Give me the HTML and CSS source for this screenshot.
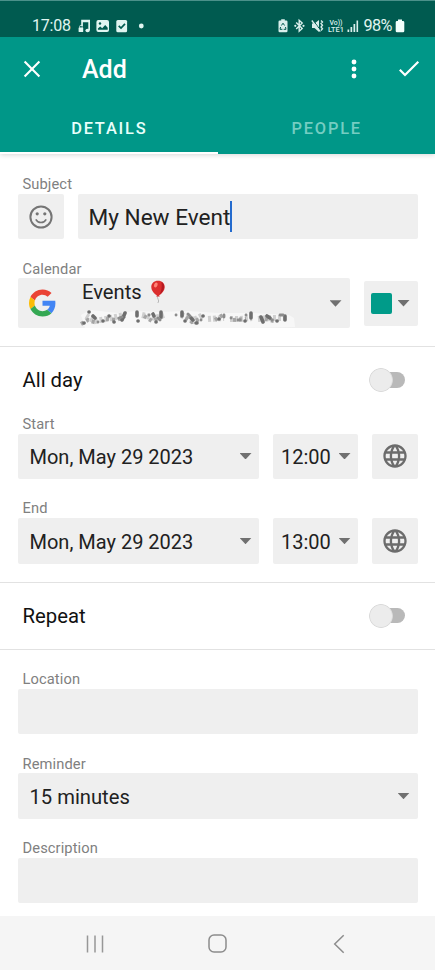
FILE: index.html
```html
<!DOCTYPE html>
<html lang="en">
<head>
<meta charset="utf-8">
<title>Add event</title>
<link rel="stylesheet" href="styles.css">
</head>
<body>
<svg class="defs" width="0" height="0">
  <symbol id="globe" viewBox="0 0 24 24"><path fill="currentColor" d="M11.99 2C6.47 2 2 6.48 2 12s4.47 10 9.99 10C17.52 22 22 17.52 22 12S17.52 2 11.99 2zm6.93 6h-2.95c-.32-1.25-.78-2.45-1.38-3.56 1.84.63 3.37 1.91 4.33 3.56zM12 4.04c.83 1.2 1.48 2.53 1.91 3.96h-3.82c.43-1.43 1.08-2.76 1.91-3.96zM4.26 14C4.1 13.36 4 12.69 4 12s.1-1.36.26-2h3.38c-.08.66-.14 1.32-.14 2 0 .68.06 1.34.14 2H4.26zm.82 2h2.95c.32 1.25.78 2.45 1.38 3.56-1.84-.63-3.37-1.9-4.33-3.56zm2.95-8H5.08c.96-1.66 2.49-2.93 4.33-3.56C8.81 5.55 8.35 6.75 8.03 8zM12 19.96c-.83-1.2-1.48-2.53-1.91-3.96h3.82c-.43 1.43-1.08 2.76-1.91 3.96zM14.34 14H9.66c-.09-.66-.16-1.32-.16-2 0-.68.07-1.35.16-2h4.68c.09.65.16 1.32.16 2 0 .68-.07 1.34-.16 2zm.25 5.56c.6-1.11 1.06-2.31 1.38-3.56h2.95c-.96 1.65-2.49 2.93-4.33 3.56zM16.36 14c.08-.66.14-1.32.14-2 0-.68-.06-1.34-.14-2h3.38c.16.64.26 1.31.26 2s-.1 1.36-.26 2h-3.38z"/></symbol>
</svg>
<header class="header">
  <div class="status">
    <span class="clock">17:08</span>
    <svg class="status-left" width="70" height="16" viewBox="0 0 70 16" fill="#e0f5f1">
      <path d="M3.2 1.800H12V12H10.300V4.300H4.900V8H3.200z"/><ellipse cx="9.600" cy="12.500" rx="2.200" ry="1.800"/><rect x=".6" y="9.500" width="4.600" height="4.600" rx=".6"/><path d="M1.600 9.800V8.600a1.300 1.300 0 0 1 2.600 0v1.200" fill="none" stroke="#e0f5f1" stroke-width=".8"/>
      <rect x="18.400" y="2" width="12.600" height="12" rx="2"/><circle cx="22" cy="5.500" r="1.200" fill="#005b50"/><path d="M19.900 11.800V10.500l2.300-2 2 1.700 3-3.200 2.500 2.800v2z" fill="#005b50"/>
      <rect x="38.300" y="2" width="10.800" height="12.300" rx="1.500"/><path d="M40.700 7.800l2.300 2.300 4-4.300" fill="none" stroke="#005b50" stroke-width="1.700"/>
      <circle cx="63.300" cy="8" r="2.400"/>
    </svg>
    <svg class="status-right" width="84" height="16" viewBox="0 0 84 16" fill="#d9efec">
      <path d="M3.200 2.500V1.200h3.600v1.300h1.400q1.300 0 1.300 1.300V13q0 1.300-1.300 1.300H1.800Q.5 14.300.5 13V3.800q0-1.300 1.300-1.300z"/><path d="M3.400 7.500L5 5.200l1.600 2.300M7.500 9l.5 2.300H5.700M4.400 11.300H2L2.600 9" fill="none" stroke="#005b50"/>
      <path d="M18.200 4.500l6 6-3 2.700V2.300l3 2.800-6 5.800" fill="none" stroke="#d9efec" stroke-width="1.400"/><circle cx="17.300" cy="7.800" r="1.100"/><circle cx="25.500" cy="7.800" r="1.100"/>
      <path d="M34 5.500h2.500L41 2v12l-4.500-4H34z"/><path d="M35 2.200l8.300 11" stroke="#005b50" stroke-width="1"/><path d="M33.800 2.500l8.500 11.200M43 2.500l1.500 1.500-1.500 1.500 1.500 1.700-1.500 1.800 1.500 1.800-1.500 1.700" fill="none" stroke="#d9efec" stroke-width="1.300"/>
      <text class="tiny" x="51.500" y="6.500" textLength="13" lengthAdjust="spacingAndGlyphs">Vo))</text><text class="tiny" x="50" y="14.300" textLength="16" lengthAdjust="spacingAndGlyphs">LTE1</text>
      <path d="M69.500 11.500h1.700V14h-1.700zM72.500 9h1.700v5h-1.700zM75.500 6h1.700v8h-1.700z"/><path d="M78.500 2.500h1.600V14h-1.600z"/>
    </svg>
    <span class="percent">98%</span>
    <svg class="battery" width="10" height="16" viewBox="0 0 10 16" fill="#f2fffc"><path d="M3 3V1.500h4V3h1q1.300 0 1.300 1.300V13q0 1.300-1.300 1.300H2Q.7 14.300.7 13V4.300Q.7 3 2 3z"/></svg>
  </div>
  <div class="appbar">
    <svg class="close" width="18" height="18" viewBox="0 0 18 18"><path d="M1.600 1.600l14.800 14.800M16.400 1.600L1.600 16.400" stroke="#fff" stroke-width="2.100"/></svg>
    <h1 class="title">Add</h1>
    <svg class="more" width="6" height="20" viewBox="0 0 6 20" fill="#fff"><circle cx="3" cy="3" r="2.450"/><circle cx="3" cy="10" r="2.450"/><circle cx="3" cy="17" r="2.450"/></svg>
    <svg class="done" width="22" height="18" viewBox="0 0 22 18"><path d="M1.800 9.800l5.200 5.200L20.300 1.800" fill="none" stroke="#fff" stroke-width="2.200"/></svg>
  </div>
  <nav class="tabs"><div class="tab active"><span>DETAILS</span></div><div class="tab"><span>PEOPLE</span></div></nav>
</header>
<main class="form">
  <section class="group">
    <div class="label">Subject</div>
    <div class="row subject">
      <div class="field square"><svg width="24" height="24" viewBox="0 0 24 24" fill="none" stroke="#757575" stroke-width="2"><circle cx="12" cy="12" r="10.600"/><path d="M6.800 14.300q1.700 3.200 5.200 3.200t5.200-3.200" stroke-width="1.600"/><circle cx="8.200" cy="8.800" r="1.600" fill="#757575" stroke="none"/><circle cx="15.800" cy="8.800" r="1.600" fill="#757575" stroke="none"/></svg></div>
      <div class="field name"><span>My New Event</span><i class="caret"></i></div>
    </div>
    <div class="label">Calendar</div>
    <div class="row calendar">
      <div class="field account">
        <svg class="google" width="27" height="28" viewBox="0 0 48 48"><path fill="#ea4335" d="M24 9.500c3.540 0 6.710 1.220 9.210 3.600l6.850-6.850C35.900 2.380 30.470 0 24 0 14.620 0 6.510 5.380 2.560 13.220l7.980 6.190C12.430 13.720 17.740 9.500 24 9.500z"/><path fill="#4285f4" d="M46.980 24.550c0-1.570-.15-3.090-.38-4.550H24v9.020h12.940c-.58 2.960-2.260 5.480-4.780 7.180l7.730 6c4.510-4.180 7.090-10.360 7.090-17.650z"/><path fill="#fbbc05" d="M10.530 28.590A14.500 14.500 0 0 1 9.770 24c0-1.600.27-3.140.76-4.590l-7.980-6.190A23.900 23.900 0 0 0 0 24c0 3.880.92 7.540 2.560 10.780l7.970-6.190z"/><path fill="#34a853" d="M24 48c6.480 0 11.930-2.130 15.890-5.810l-7.730-6c-2.150 1.450-4.920 2.300-8.160 2.300-6.260 0-11.570-4.220-13.470-9.910l-7.980 6.190C6.510 42.620 14.620 48 24 48z"/></svg>
        <div class="account-text">
          <div class="account-name"><span>Events</span><svg width="16" height="24" viewBox="0 0 16 24"><path d="M8 15.500q-1.200 2 .1 3.700t-.2 3.800" fill="none" stroke="#aaa" stroke-width=".8"/><path d="M8 .8c4 0 6.700 2.700 6.700 6.200 0 3.600-3 7-5.600 8.200l.7 1.300H6.200l.7-1.300C4.300 14 1.300 10.600 1.300 7 1.300 3.500 4 .8 8 .8z" fill="#dc2e2e"/><path d="M11.500 2q3 1.800 2.600 5.500-.6 4-4.600 7 2.900-4.500 2-12.500z" fill="#b51a22"/><ellipse cx="5.800" cy="5" rx="1.700" ry="2.500" transform="rotate(25 5.800 5)" fill="#ff8376"/></svg></div>
          <svg class="redacted" width="220" height="22" viewBox="0 0 220 22" fill="none">
            <path d="M1 9l9-5 28 3 18-2 22 1 30-1 30 2 36 0 35 2 5 3 1 9-46 1-48 0-20 0-30 1-30-1-36 0z" fill="#f7f7f7"/>
            <g stroke="#cfcfcf" stroke-width="6" stroke-dasharray="3 2"><path d="M6 10l9 5 16-3 13-3M62 9l13 3 9-3M101 9l13 5 9-5M128 13l16-1M150 13h10l12-1M178 13l12-1 15 0"/></g>
            <g stroke="#a5a5a5" stroke-width="4" stroke-dasharray="3 3"><path d="M1 18l7-4 9 3M26 13l11 1 8-4M64 10l8 5 10-4M106 11l6 5 8-3M135 14l8-5M153 14l13-1M185 13l9 2"/></g>
            <g stroke="#6e6e6e" stroke-width="3.600" stroke-linecap="round"><path d="M9 6h.1M13 10l2 2M4 17h.1M23 15h.1M29 10h.1M34 16h.1M45 7l-3 7M57 6v4M58 15h.1M73 8l1 2M81 6v5M76 16h.1M102 6v4M105 15h.1M111 12l2 2M116 17h1M123 10h.1M139 13h.1M165 15h.1M171 7v5M181 11l2 5M187 10l3 2M197 15h.1M205 10v4"/></g>
            <g stroke="#8c8c8c" stroke-width="2.800" stroke-linecap="round"><path d="M18 16h.1M39 12l3-1M69 9h.1M78 12l2 2M96 9h.1M108 8l2 2M121 14h.1M144 9v2M151 12h.1M158 14h2M166 9h.1M192 14h.1M200 9l3 0"/></g>
          </svg>
        </div>
        <i class="arrow"></i>
      </div>
      <div class="field color"><i class="swatch"></i><i class="arrow"></i></div>
    </div>
  </section>
  <section class="group dates">
    <div class="toggle-row"><span>All day</span><i class="switch"></i></div>
    <div class="label">Start</div>
    <div class="row when">
      <div class="field select date"><span>Mon, May 29 2023</span><i class="arrow"></i></div>
      <div class="field select time"><span>12:00</span><i class="arrow"></i></div>
      <div class="field square"><svg class="globe" width="28" height="28"><use href="#globe"/></svg></div>
    </div>
    <div class="label">End</div>
    <div class="row when">
      <div class="field select date"><span>Mon, May 29 2023</span><i class="arrow"></i></div>
      <div class="field select time"><span>13:00</span><i class="arrow"></i></div>
      <div class="field square"><svg class="globe" width="28" height="28"><use href="#globe"/></svg></div>
    </div>
  </section>
  <section class="group repeat"><div class="toggle-row"><span>Repeat</span><i class="switch"></i></div></section>
  <section class="group extra">
    <div class="label">Location</div>
    <div class="field"></div>
    <div class="label">Reminder</div>
    <div class="field select"><span>15 minutes</span><i class="arrow"></i></div>
    <div class="label">Description</div>
    <div class="field"></div>
  </section>
</main>
<footer class="navbar">
  <svg width="18" height="18" viewBox="0 0 18 18"><path d="M1.500.5v17M9 .5v17M16.500.5v17" stroke="#979797" stroke-width="1.500"/></svg>
  <svg class="home" width="19" height="19" viewBox="0 0 19 19"><rect x="1" y="1" width="17" height="17" rx="5" fill="none" stroke="#8c8c8c" stroke-width="1.500"/></svg>
  <svg width="12" height="20" viewBox="0 0 12 20"><path d="M10.700 1.200L1.700 10l9 8.800" fill="none" stroke="#8c8c8c" stroke-width="1.500"/></svg>
</footer>
</body>
</html>
```
FILE: styles.css
```css
* { box-sizing: border-box; }
body { margin: 0; height: 970px; overflow: hidden; display: flex; flex-direction: column; background: #fff; color: #212121; font-family: Roboto, "Liberation Sans", sans-serif; }
svg { display: block; flex: none; }
.defs { display: none; }
i { display: block; flex: none; }

.header { height: 154px; flex: none; background: #009788; color: #fff; box-shadow: 0 1px 5px rgba(0, 0, 0, .16); }
.status { height: 36.5px; padding: 14px 30.5px 0 32px; border-top: 1px solid #4b918a; background: #005b50; display: flex; align-items: center; color: #e0f5f1; line-height: 20px; }
.clock { width: 46px; font-size: 16px; letter-spacing: -.2px; }
.status-left { margin-right: auto; }
.status-right { margin-right: 2px; }
.tiny { font: 500 6.4px Roboto, sans-serif; }
.percent { width: 31px; font-size: 16.3px; letter-spacing: -.7px; }
.appbar { height: 64px; padding: 0 15.5px 0 23px; display: flex; align-items: center; }
.title { margin: 2px auto 0 41px; font-size: 25px; font-weight: 500; line-height: 32px; }
.more { margin-right: 41px; }
.tabs { height: 53.5px; display: flex; }
.tab { flex: 1; padding: 16px 0 0 1px; text-align: center; font-size: 16.4px; font-weight: 500; line-height: 24px; letter-spacing: 1.8px; color: #75cdc2; }
.tab.active { color: #e8fffb; border-bottom: 2px solid #fff; }

.form { flex: 1; min-height: 0; }
.group { padding: 0 17.5px 0 18px; border-bottom: 1.5px solid #e2e2e2; }
.group:first-child { height: 193px; padding-top: 20px; }
.label { height: 20px; padding: .4px 0 0 4.5px; font-size: 14.7px; line-height: 20px; color: #808080; letter-spacing: .1px; }
.row { display: flex; }
.field { height: 45.3px; border-radius: 2px; background: #efefef; display: flex; align-items: center; }
.square { width: 46px; justify-content: center; flex: none; }
.field + .label, .row + .label { margin-top: 19px; }
.subject { gap: 13.5px; }
.name { flex: 1; padding-left: 11px; font-size: 22.6px; }
.name span { padding-top: 1px; }
.caret { width: 2px; height: 31px; background: #246bce; }
.calendar { gap: 14px; align-items: center; height: 50px; }
.account { flex: 1; height: 50px; padding: 0 8px 0 11px; align-items: flex-start; }
.google { margin-top: 11px; }
.account-text { width: 220px; margin-left: 26px; }
.account-name { height: 28px; display: flex; align-items: center; gap: 8px; font-size: 20.2px; }
.account-name svg { margin-top: -1px; }
.account .arrow { margin: 22px 0 0 auto; }
.redacted { margin-left: -2px; }
.arrow { width: 12px; height: 6.5px; background: #707070; clip-path: polygon(0 0, 100% 0, 50% 100%); }
.color { width: 54px; justify-content: space-between; padding: 0 8px 0 7.5px; }
.swatch { width: 21px; height: 21px; border-radius: 2px; background: #009b89; }

.toggle-row { height: 65.5px; padding: 0 12.5px 0 4.5px; display: flex; align-items: center; justify-content: space-between; font-size: 20.3px; color: #111; }
.switch { width: 36px; height: 24px; background: radial-gradient(circle at 12px 12px, #ececec 10.5px, #dadada 11.5px, transparent 12.2px); position: relative; }
.switch::before { content: ""; position: absolute; z-index: -1; left: 10px; top: 4px; width: 26px; height: 15.5px; border-radius: 8px; background: #b9b9b9; }
.dates { height: 235.8px; padding-top: .5px; }
.dates .toggle-row { margin-bottom: .5px; }
.dates .row + .label { margin-top: 19.3px; }
.when { gap: 14px; }
.when:last-child { padding-top: .3px; }
.select { padding: 0 7px 0 11.5px; justify-content: space-between; font-size: 20px; }
.select span { padding-top: 1px; }
.date { flex: 1; }
.time { width: 85px; padding-left: 8.5px; }
.globe { color: #6c6c6c; }
.repeat { height: 67px; }
.extra { padding-top: 19.3px; border: 0; }
.extra .select { font-size: 20.2px; }
.extra .select .arrow { margin-right: 1px; }

.navbar { height: 54.5px; flex: none; background: #f5f5f5; padding: 2px 90px 0 86px; display: flex; align-items: center; justify-content: space-between; }
.home { margin-right: 3px; }
```
